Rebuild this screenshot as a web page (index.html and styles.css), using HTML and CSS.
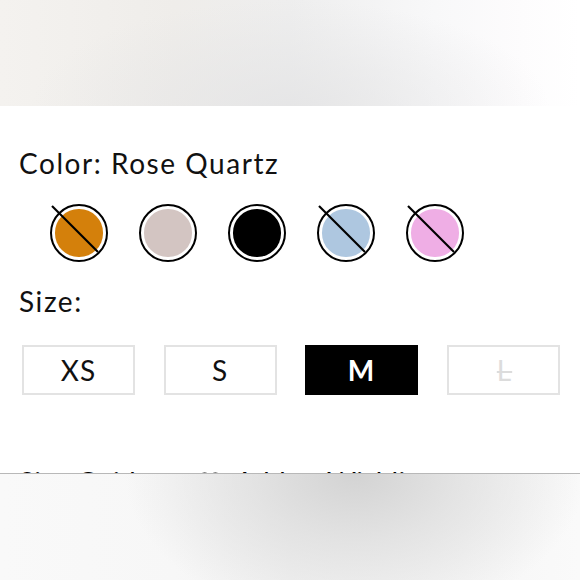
FILE: index.html
```html
<!DOCTYPE html>
<html lang="en">
<head>
<meta charset="utf-8">
<title>Product options</title>
<link rel="stylesheet" href="styles.css">
</head>
<body>
<div class="hero"></div>
<main class="panel">
  <h2 class="label label-color">Color: Rose Quartz</h2>
  <div class="swatches">
    <span class="swatch disabled"><span class="fill orange"></span><svg class="slash" viewBox="0 0 58 58"><line x1="3" y1="3" x2="49" y2="49"/></svg></span>
    <span class="swatch"><span class="fill rose"></span></span>
    <span class="swatch"><span class="fill black"></span></span>
    <span class="swatch disabled"><span class="fill blue"></span><svg class="slash" viewBox="0 0 58 58"><line x1="3" y1="3" x2="49" y2="49"/></svg></span>
    <span class="swatch disabled"><span class="fill pink"></span><svg class="slash" viewBox="0 0 58 58"><line x1="3" y1="3" x2="49" y2="49"/></svg></span>
  </div>
  <h2 class="label label-size">Size:</h2>
  <div class="sizes">
    <button class="size">XS</button>
    <button class="size">S</button>
    <button class="size selected">M</button>
    <button class="size unavailable"><span class="strike">L</span></button>
  </div>
  <div class="links">
    <span class="link">Size Guide</span>
    <span class="link wish"><svg class="heart" viewBox="0 0 28 26"><path d="M14 24 C6 17 2 13 2 8 C2 4.5 4.8 2 8 2 C10.6 2 12.6 3.6 14 5.8 C15.4 3.6 17.4 2 20 2 C23.2 2 26 4.5 26 8 C26 13 22 17 14 24 Z"/></svg>Add to Wishlist</span>
  </div>
</main>
<div class="sheet"></div>
</body>
</html>
```
FILE: styles.css
```css
* { box-sizing: border-box; }
html, body { margin: 0; padding: 0; }
body {
  width: 580px;
  height: 580px;
  overflow: hidden;
  position: relative;
  background: #ffffff;
  font-family: "Lato", "Liberation Sans", sans-serif;
  color: #111;
}
.hero {
  height: 106px;
  background:
    radial-gradient(ellipse 260px 110px at 290px 110px, rgba(228,228,229,0.85), rgba(228,228,229,0) 100%),
    linear-gradient(90deg, #f4f2ef 0%, #efedea 30%, #eeeeee 50%, #f8f8f9 75%, #fdfcfd 90%, #ffffff 100%);
}
.panel {
  padding: 0 0 0 19px;
}
.label {
  margin: 0;
  font-weight: 400;
  font-size: 28px;
  line-height: 34px;
  letter-spacing: 1.55px;
  color: #111;
}
.label-color { padding-top: 40px; }
.swatches {
  display: flex;
  gap: 31px;
  margin: 24px 0 0 31px;
}
.swatch {
  position: relative;
  width: 58px;
  height: 58px;
  border: 2.6px solid #000;
  border-radius: 50%;
  padding: 3.4px;
  background: #fff;
}
.fill {
  display: block;
  width: 100%;
  height: 100%;
  border-radius: 50%;
}
.orange { background: #d4800b; }
.rose { background: #d3c5c2; }
.black { background: #000; }
.blue { background: #aec7e0; }
.pink { background: #efaee5; }
.slash {
  position: absolute;
  left: -2.6px;
  top: -2.6px;
  width: 58px;
  height: 58px;
  overflow: visible;
}
.slash line { stroke: #000; stroke-width: 2.2; }
.label-size { margin-top: 22px; }
.sizes {
  display: flex;
  gap: 28.5px;
  margin: 27px 0 0 3px;
}
.size {
  flex: 0 0 113px;
  width: 113px;
  height: 50px;
  border: 2px solid #e3e3e3;
  background: #fff;
  font-family: inherit;
  font-size: 28px;
  font-weight: 400;
  letter-spacing: 1px;
  color: #111;
  padding: 0;
  display: flex;
  align-items: center;
  justify-content: center;
}
.size.selected {
  background: #000;
  border-color: #000;
  color: #fff;
  font-weight: 700;
}
.size.unavailable { color: #dcdcdc; }
.strike {
  text-decoration: line-through;
  text-decoration-thickness: 2px;
  padding-left: 3px;
}
.links {
  display: flex;
  align-items: flex-start;
  gap: 46px;
  margin-top: 70px;
  font-size: 28px;
  line-height: 34px;
  letter-spacing: 0.3px;
  color: #000;
}
.wish { display: flex; align-items: flex-start; gap: 12px; }
.heart { width: 26px; height: 24px; fill: none; stroke: #000; stroke-width: 3; margin-top: 7px; }
.sheet {
  position: absolute;
  left: 0;
  right: 0;
  top: 473px;
  bottom: 0;
  border-top: 1px solid #b8b8b8;
  background:
    radial-gradient(ellipse 230px 150px at 355px 0px, #d3d3d3 0%, rgba(220,220,220,0.7) 45%, rgba(245,245,245,0) 100%),
    linear-gradient(90deg, #f9f9f9 0%, #f7f7f7 30%, #f2f2f2 50%, #f5f5f5 75%, #fafafa 100%);
}
```
